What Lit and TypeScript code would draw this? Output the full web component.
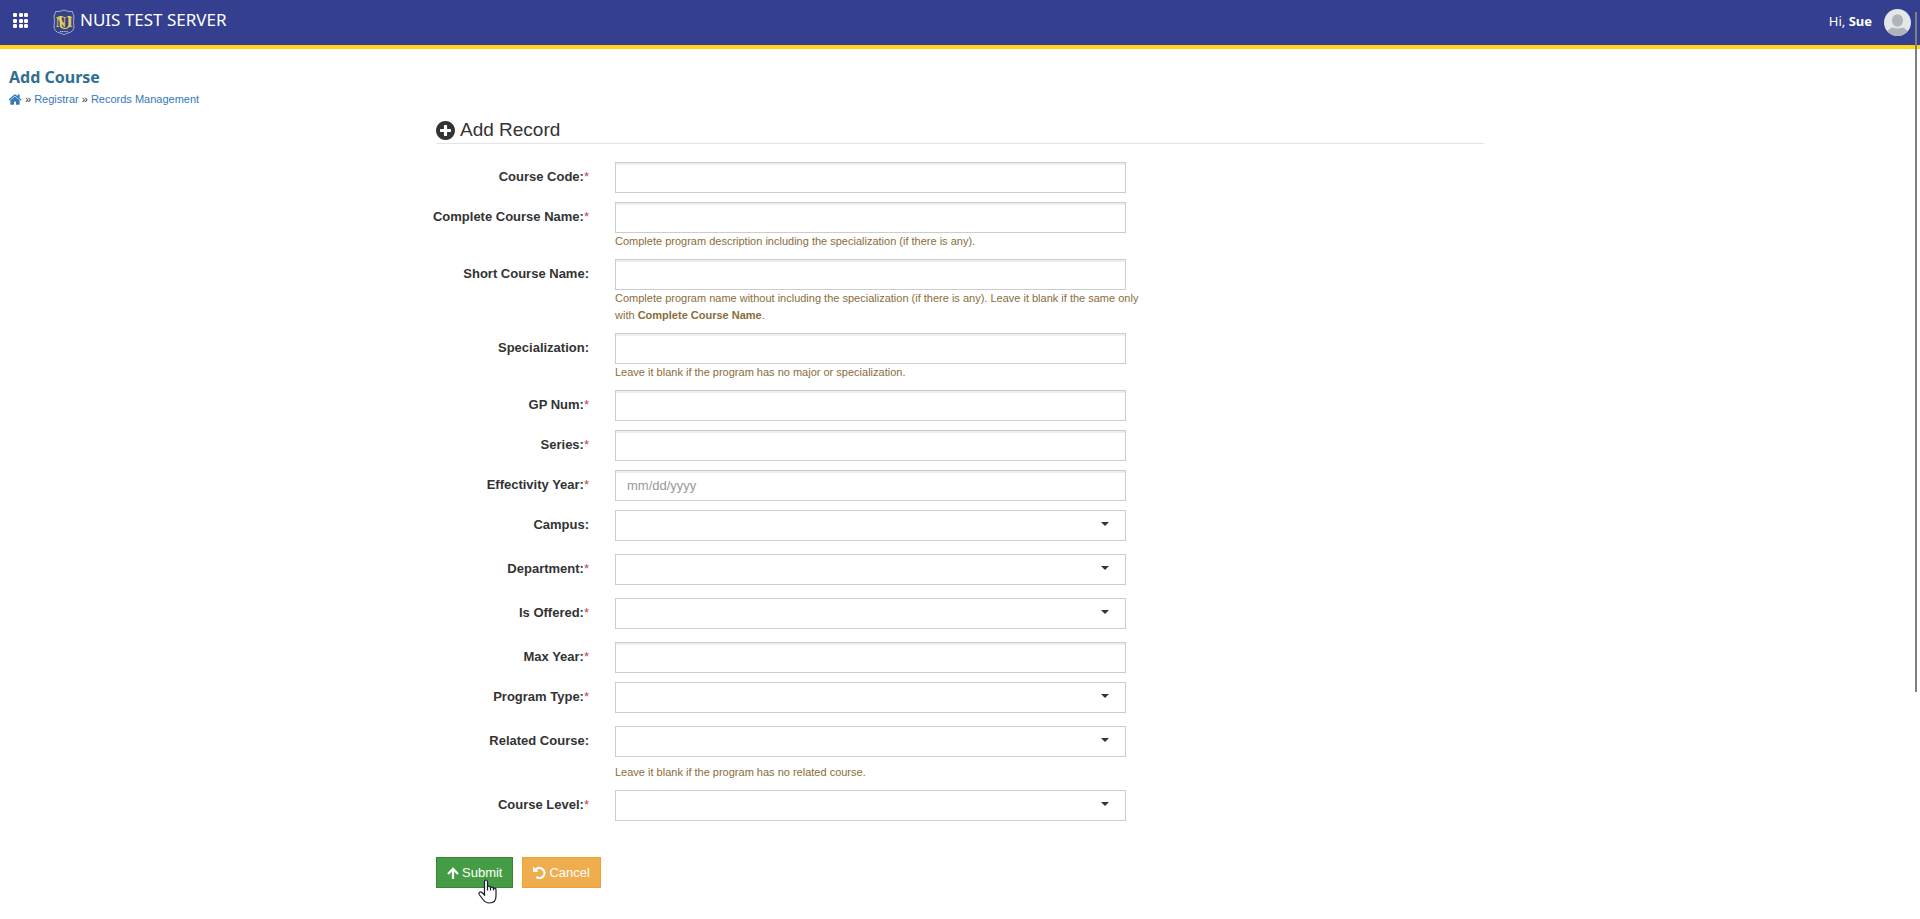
import { LitElement, html, css, svg, nothing } from "lit";
import { customElement } from "lit/decorators.js";

type Field = {
  id: string;
  label: string;
  kind: "text" | "select";
  required?: boolean;
  placeholder?: string;
  help?: unknown;
};

const fields: Field[] = [
  { id: "code", label: "Course Code:", kind: "text", required: true },
  { id: "name", label: "Complete Course Name:", kind: "text", required: true,
    help: "Complete program description including the specialization (if there is any)." },
  { id: "short", label: "Short Course Name:", kind: "text",
    help: html`Complete program name without including the specialization (if there is any). Leave it blank if the same only<br />with <b>Complete Course Name</b>.` },
  { id: "spec", label: "Specialization:", kind: "text",
    help: "Leave it blank if the program has no major or specialization." },
  { id: "gp", label: "GP Num:", kind: "text", required: true },
  { id: "series", label: "Series:", kind: "text", required: true },
  { id: "year", label: "Effectivity Year:", kind: "text", required: true, placeholder: "mm/dd/yyyy" },
  { id: "campus", label: "Campus:", kind: "select" },
  { id: "dept", label: "Department:", kind: "select", required: true },
  { id: "offered", label: "Is Offered:", kind: "select", required: true },
  { id: "max", label: "Max Year:", kind: "text", required: true },
  { id: "type", label: "Program Type:", kind: "select", required: true },
  { id: "related", label: "Related Course:", kind: "select",
    help: "Leave it blank if the program has no related course." },
  { id: "level", label: "Course Level:", kind: "select", required: true },
];

@customElement("app-root")
export class AppRoot extends LitElement {
  static styles = css`
    :host {
      display: block;
      position: relative;
      min-height: 100vh;
      background: #fff;
      color: #333;
      font: 13px/18px "Liberation Sans", Arial, sans-serif;
    }
    * { box-sizing: border-box; }
    svg { display: block; flex: none; }
    a { color: #337ab7; text-decoration: none; }
    .bar {
      display: flex;
      align-items: center;
      height: 49px;
      padding: 0 9px 0 13px;
      background: #353f8f;
      border-bottom: 4px solid #ffd51c;
      color: #fff;
      font-family: "Noto Sans", "Open Sans", sans-serif;
    }
    .menu {
      padding: 0 0 4px;
      margin-right: 25px;
      border: 0;
      background: none;
      color: inherit;
    }
    .brand {
      display: flex;
      align-items: center;
      gap: 5px;
      color: #fff;
      font-size: 17px;
      line-height: 24px;
    }
    .brand-name { padding-bottom: 5px; }
    .user {
      display: flex;
      align-items: center;
      gap: 12px;
      margin-left: auto;
      font-size: 13px;
    }
    .user-name { padding-bottom: 4px; }
    .page-head { padding: 16px 9px 0; }
    h1 {
      margin: 0;
      color: #2f6f8f;
      font: bold 16px/24px "Noto Sans", "Open Sans", sans-serif;
    }
    .crumbs {
      display: flex;
      align-items: center;
      gap: 3px;
      height: 20px;
      font-size: 11px;
    }
    main {
      width: calc(100% - 32px);
      max-width: 1048px;
      margin: 9px auto 0;
    }
    h2 {
      display: flex;
      align-items: center;
      gap: 5px;
      margin: 0 0 18px;
      padding-bottom: 1px;
      border-bottom: 1px solid #e5e5e5;
      font-size: 19px;
      line-height: 24px;
      font-weight: normal;
    }
    .row {
      display: grid;
      grid-template-columns: 153px minmax(0, 511px);
      column-gap: 26px;
      margin-bottom: 9px;
    }
    label {
      align-self: start;
      justify-self: end;
      padding-top: 6px;
      font-weight: bold;
      white-space: nowrap;
    }
    .star {
      color: #b94a48;
      font-weight: normal;
    }
    input, select {
      display: block;
      width: 100%;
      height: 31px;
      margin: 0;
      padding: 0 11px;
      border: 1px solid #ccc;
      border-radius: 0;
      background: #fff;
      color: #555;
      font: inherit;
      appearance: none;
      outline: none;
    }
    input { box-shadow: inset 0 2px 0 #eee; }
    input::placeholder { color: #999; opacity: 1; }
    .pick { position: relative; margin-bottom: 4px; }
    .pick::after {
      content: "";
      position: absolute;
      top: 12px;
      right: 17px;
      border: 4px solid transparent;
      border-top-color: #333;
      border-bottom: 0;
      pointer-events: none;
    }
    .help {
      margin: 0;
      color: #8a6d3b;
      font-size: 11px;
      line-height: 17px;
      white-space: nowrap;
    }
    .pick + .help { margin-top: 7px; }
    .actions { display: flex; gap: 9px; margin-top: 32px; }
    .btn {
      display: flex;
      align-items: center;
      gap: 3px;
      height: 31px;
      padding: 0 10px;
      border: 1px solid #eea236;
      background: #f0ad4e;
      color: #fff;
      font: inherit;
    }
    .submit {
      position: relative;
      border-color: #398439;
      background: #449d44;
    }
    .pointer { position: absolute; left: 41px; top: 21px; }
    .thumb {
      position: absolute;
      top: 12px;
      right: 3px;
      width: 2px;
      height: 74vh;
      background: #808080;
    }
    @media (max-width: 760px) {
      .row { grid-template-columns: minmax(0, 1fr); }
      label { justify-self: start; }
      .help { white-space: normal; }
    }
  `;

  private field(f: Field) {
    return html`<div class="row">
      <label for=${f.id}>${f.label}${f.required ? html`<span class="star">*</span>` : nothing}</label>
      <div>
        ${f.kind === "text"
          ? html`<input id=${f.id} type="text" placeholder=${f.placeholder ?? nothing} />`
          : html`<div class="pick"><select id=${f.id}><option></option></select></div>`}
        ${f.help ? html`<p class="help">${f.help}</p>` : nothing}
      </div>
    </div>`;
  }

  render() {
    return html`
      <header class="bar">
        <button class="menu" type="button" aria-label="Menu">
          <svg width="15" height="15" viewBox="0 0 15 15" fill="#fff">
            ${[0, 6, 11].map((y) => [0, 6, 11].map((x) => svg`<rect x=${x} y=${y} width="4" height="4" rx="1.3" />`))}
          </svg>
        </button>
        <a class="brand" href="#">
          <svg width="22" height="27" viewBox="0 0 22 27">
            <path d="M2.500 2.500Q7 3 11 1Q15 3 19.500 2.500Q19.800 5 21 7Q20 12 21 18Q20.500 23 15 24Q12.500 24.500 11 26Q9.500 24.500 7 24Q1.500 23 1 18Q2 12 1 7Q2.200 5 2.500 2.500Z" fill="#39437f" stroke="#a4abd6" stroke-width="1" />
            <g fill="#d9c35a" font-family="Liberation Serif, serif" font-weight="bold" text-anchor="middle">
              <text x="8" y="18" font-size="15">N</text>
              <text x="17" y="18" font-size="15">I</text>
              <text x="11.500" y="20" font-size="19" fill="#ecd965" font-weight="normal">U</text>
            </g>
            <path d="M7 22.500h8" stroke="#b9bedd" stroke-width="1.200" stroke-dasharray="1.400 .7" />
          </svg>
          <span class="brand-name">NUIS TEST SERVER</span>
        </a>
        <div class="user">
          <span class="user-name">Hi, <b>Sue</b></span>
          <svg width="27" height="27" viewBox="0 0 27 27">
            <defs><clipPath id="disc"><circle cx="13.500" cy="13.500" r="13.500" /></clipPath></defs>
            <g clip-path="url(#disc)">
              <rect width="27" height="27" fill="#e4e6e7" />
              <ellipse cx="13.500" cy="11.500" rx="5.500" ry="6.200" fill="#aeb4b7" />
              <path d="M2.500 27Q3 19.500 8.500 18.500Q13.500 20.500 18.500 18.500Q24 19.500 24.500 27Z" fill="#aeb4b7" />
            </g>
          </svg>
        </div>
      </header>
      <div class="page-head">
        <h1>Add Course</h1>
        <nav class="crumbs">
          <a href="#" aria-label="Home">
            <svg width="13" height="11" viewBox="89 240 1614 1296" fill="#337ab7">
              <path d="M1408 992v480q0 26-19 45t-45 19h-384v-384h-256v384h-384q-26 0-45-19t-19-45v-480q0-1 .5-3t.5-3l575-474 575 474q1 2 1 6zm223-69l-62 74q-8 9-21 11h-3q-13 0-21-7l-692-577-692 577q-12 8-24 7-13-2-21-11l-62-74q-8-10-7-23.500t11-21.500l719-599q32-26 76-26t76 26l244 204v-195q0-14 9-23t23-9h192q14 0 23 9t9 23v408l219 182q10 8 11 21.500t-7 23.500z" />
            </svg>
          </a>
          <span>»</span><a href="#">Registrar</a><span>»</span><a href="#">Records Management</a>
        </nav>
      </div>
      <main>
        <h2>
          <svg width="19" height="19" viewBox="128 128 1536 1536" fill="#333">
            <path d="M1344 960v-128q0-26-19-45t-45-19h-256v-256q0-26-19-45t-45-19h-128q-26 0-45 19t-19 45v256h-256q-26 0-45 19t-19 45v128q0 26 19 45t45 19h256v256q0 26 19 45t45 19h128q26 0 45-19t19-45v-256h256q26 0 45-19t19-45zm320-64q0 209-103 385.500t-279.500 279.500-385.500 103-385.500-103-279.500-279.500-103-385.500 103-385.500 279.500-279.500 385.500-103 385.500 103 279.500 279.500 103 385.500z" />
          </svg>
          Add Record
        </h2>
        <form @submit=${(e: Event) => e.preventDefault()}>
          ${fields.map((f) => this.field(f))}
          <div class="actions">
            <button class="btn submit" type="submit">
              <svg width="12" height="12" viewBox="0 0 12 12" fill="none" stroke="#fff" stroke-width="2.200">
                <path d="M6 12V1.800M1 7L6 1.800L11 7" />
              </svg>
              Submit
              <svg class="pointer" width="19" height="25" viewBox="0 0 19 25">
                <path d="M6.500 15V3Q6.500 1 8 1Q9.500 1 9.500 3V7.500Q12 6.500 12.500 8.500Q15 7.500 15.500 9.500Q18 8.500 18 11V17Q18 24 11.500 24Q7.500 24 5 20.500L1.200 15.500Q.5 13.500 2 13Q3.500 12.500 6.500 16Z" fill="#fff" stroke="#1c1c30" stroke-width="1.200" />
                <path d="M9.500 7v4.500M12.500 8v3.500M15.500 9v2.500" stroke="#1c1c30" stroke-width="1.200" />
              </svg>
            </button>
            <button class="btn" type="button">
              <svg width="13" height="13" viewBox="0 0 13 13">
                <path d="M2.800 3.600A5 5 0 1 1 3.300 10.900" fill="none" stroke="#fff" stroke-width="2.300" />
                <path d="M0 .5L5.600 5.800L0 6Z" fill="#fff" />
              </svg>
              Cancel
            </button>
          </div>
        </form>
      </main>
      <div class="thumb"></div>
    `;
  }
}
